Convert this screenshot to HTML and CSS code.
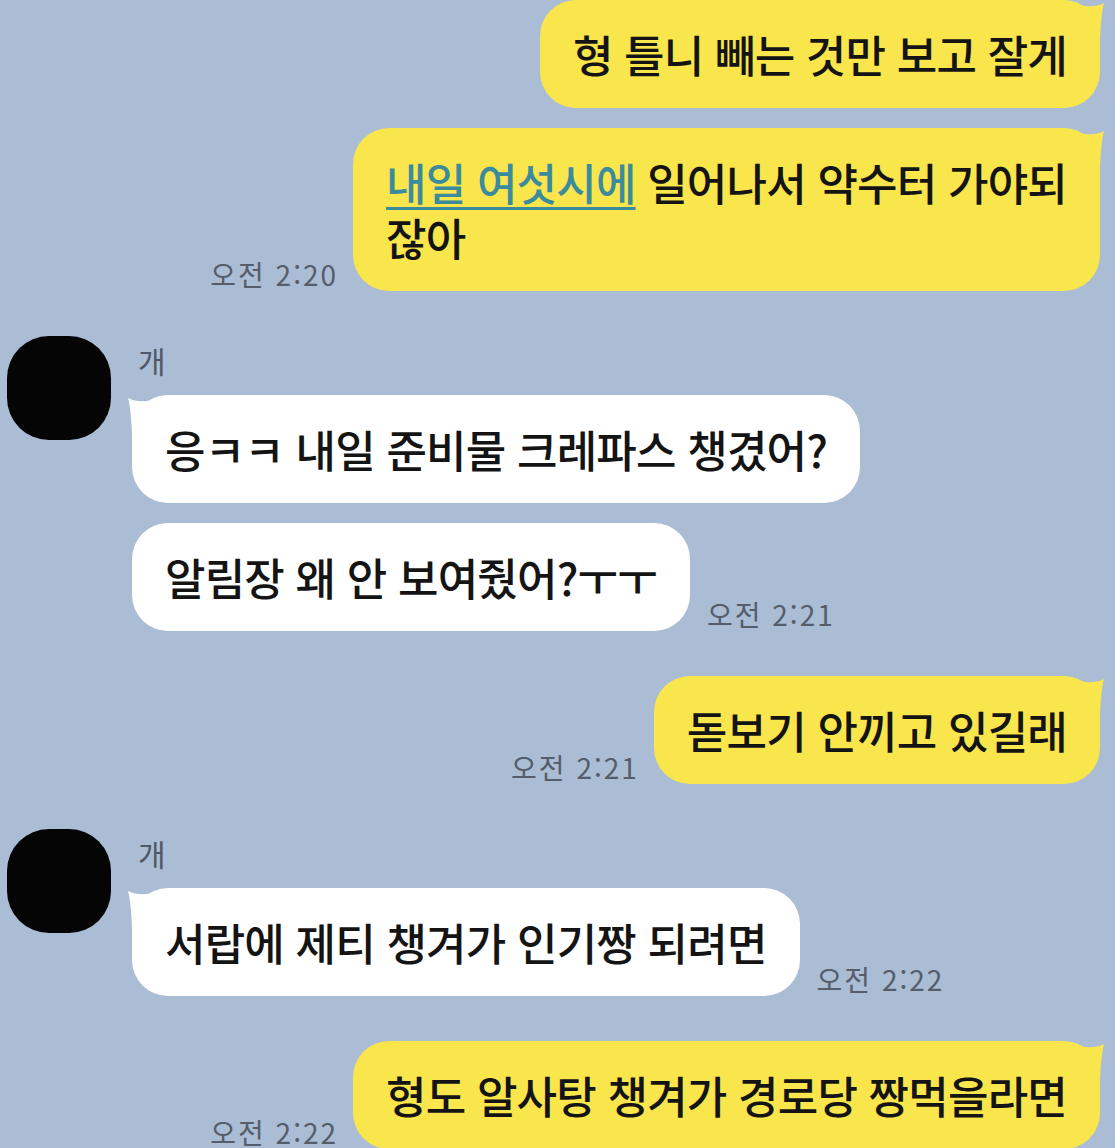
FILE: index.html
```html
<!DOCTYPE html>
<html lang="ko">
<head>
<meta charset="utf-8">
<title>채팅</title>
<link rel="stylesheet" href="styles.css">
</head>
<body>
<main class="chat">
  <section class="group me">
    <div class="row">
      <div class="bubble yellow">형 틀니 빼는 것만 보고 잘게</div>
    </div>
    <div class="row">
      <span class="time">오전 2:20</span>
      <div class="bubble yellow"><span class="link">내일 여섯시에</span> 일어나서 약수터 가야되<br>잖아</div>
    </div>
  </section>

  <section class="group them">
    <div class="avatar"></div>
    <div class="col">
      <div class="name">개</div>
      <div class="row">
        <div class="bubble white tail">응ㅋㅋ 내일 준비물 크레파스 챙겼어?</div>
      </div>
      <div class="row">
        <div class="bubble white">알림장 왜 안 보여줬어?ㅜㅜ</div>
        <span class="time">오전 2:21</span>
      </div>
    </div>
  </section>

  <section class="group me">
    <div class="row">
      <span class="time">오전 2:21</span>
      <div class="bubble yellow tail">돋보기 안끼고 있길래</div>
    </div>
  </section>

  <section class="group them">
    <div class="avatar"></div>
    <div class="col">
      <div class="name">개</div>
      <div class="row">
        <div class="bubble white tail">서랍에 제티 챙겨가 인기짱 되려면</div>
        <span class="time">오전 2:22</span>
      </div>
    </div>
  </section>

  <section class="group me">
    <div class="row">
      <span class="time">오전 2:22</span>
      <div class="bubble yellow tail">형도 알사탕 챙겨가 경로당 짱먹을라면</div>
    </div>
  </section>
</main>
</body>
</html>
```

FILE: styles.css
```css
html, body {
  margin: 0;
  padding: 0;
}

body {
  width: 1115px;
  height: 1148px;
  overflow: hidden;
  background: #abbcd5;
  font-family: "Noto Sans CJK KR", "Noto Sans", sans-serif;
  color: #141414;
}

.chat {
  display: flex;
  flex-direction: column;
  gap: 45px;
  padding: 0 15px 0 7px;
}

.group {
  display: flex;
  flex-direction: column;
  gap: 20px;
}

.group.them {
  flex-direction: row;
  align-items: flex-start;
  gap: 21px;
}

.col {
  display: flex;
  flex-direction: column;
  gap: 20px;
}

.row {
  display: flex;
  align-items: flex-end;
}

.me .row {
  justify-content: flex-end;
  gap: 15px;
}

.them .row {
  justify-content: flex-start;
  gap: 17px;
}

.bubble {
  position: relative;
  font-size: 44px;
  font-weight: 500;
  letter-spacing: -0.8px;
  line-height: 55px;
  padding: 26.5px 33px 26.5px 33px;
  border-radius: 36px;
  white-space: nowrap;
}

.yellow {
  background: #f9e54c;
}

.white {
  background: #ffffff;
}

.bubble.yellow::before {
  content: "";
  position: absolute;
  top: 0;
  right: -8px;
  width: 44px;
  height: 40px;
  background: #f9e54c;
  clip-path: path("M 6 2 Q 26 10 40 3 Q 37 14 36 40 L 0 40 L 0 4 Z");
}

.bubble.white.tail::before {
  content: "";
  position: absolute;
  top: 0;
  left: -8px;
  width: 44px;
  height: 40px;
  background: #ffffff;
  clip-path: path("M 38 2 Q 18 10 4 3 Q 7 14 8 40 L 44 40 L 44 4 Z");
}

.link {
  color: #3b8b9c;
  text-decoration: underline;
  text-decoration-thickness: 3px;
  text-underline-offset: 6px;
}

.time {
  font-size: 28px;
  line-height: 30px;
  color: #555d6b;
  letter-spacing: 2px;
  white-space: nowrap;
  margin-bottom: 2px;
}

.avatar {
  flex: none;
  width: 104px;
  height: 104px;
  border-radius: 42px;
  background: #050505;
}

.name {
  font-size: 30px;
  line-height: 40px;
  color: #4f5866;
  margin: 4px 0 -5px 6px;
}
```
